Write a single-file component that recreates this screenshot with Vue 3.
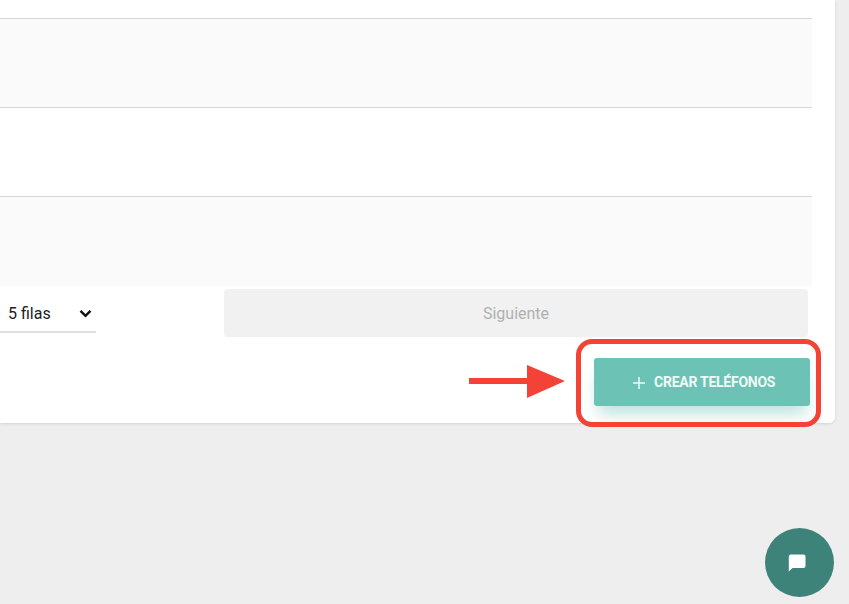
<script setup>
const rows = [
  { id: 1, tone: 'plain', h: 'first' },
  { id: 2, tone: 'stripe' },
  { id: 3, tone: 'plain' },
  { id: 4, tone: 'stripe' }
]
</script>

<template>
  <div class="page">
    <section class="card">
      <div class="table">
        <div v-for="r in rows" :key="r.id" class="row" :class="[r.tone, r.h]"></div>
      </div>
      <div class="pagination">
        <div class="size-wrap">
          <select class="size" aria-label="Filas">
            <option>5 filas</option>
          </select>
          <svg class="chev" width="13" height="9" viewBox="0 0 13 9"><path d="M1.500 1.800L6.500 6.800L11.500 1.800" fill="none" stroke="#111" stroke-width="2.400"/></svg>
        </div>
        <button class="next" disabled>Siguiente</button>
      </div>
      <div class="actions">
        <button class="create">
          <svg class="plus" width="14" height="14" viewBox="0 0 14 14"><path d="M7 1v12M1 7h12" stroke="currentColor" stroke-width="1.500" fill="none"/></svg>
          <span>CREAR TELÉFONOS</span>
        </button>
      </div>
    </section>

    <svg class="arrow" width="100" height="38" viewBox="0 0 100 38">
      <path d="M1 15H59V2L97 18L59 35V21H1Z" fill="#f44336"/>
    </svg>
    <div class="highlight"></div>

    <button class="chat" aria-label="Chat">
      <svg width="20" height="20" viewBox="0 0 20 20"><path d="M3.500 1.500H16.500A2 2 0 0 1 18.500 3.500V13A2 2 0 0 1 16.500 15H5.500L1.800 18.500V3.500A2 2 0 0 1 3.500 1.500Z" fill="#fff"/></svg>
    </button>
  </div>
</template>

<style scoped>
.page {
  position: relative;
  width: 849px;
  height: 604px;
  overflow: hidden;
  background: #eeeeee;
  font-family: Roboto, "Liberation Sans", sans-serif;
}
.card {
  width: 835px;
  height: 423px;
  box-sizing: border-box;
  background: #fff;
  border-radius: 0 0 6px 0;
  box-shadow: 0 1px 3px rgba(0, 0, 0, 0.12);
}
.table {
  width: 812px;
}
.row {
  height: 88px;
  border-bottom: 1px solid #d6d6d6;
}
.row:last-child {
  border-bottom: none;
  height: 89px;
}
.row.first {
  height: 18px;
}
.stripe {
  background: #fafafa;
}
.pagination {
  width: 808px;
  height: 51px;
  padding-top: 3px;
  box-sizing: border-box;
  display: flex;
  align-items: flex-start;
}
.size-wrap {
  position: relative;
  width: 96px;
  height: 44px;
  margin-right: 128px;
  flex: none;
}
.size {
  appearance: none;
  display: block;
  width: 100%;
  height: 100%;
  box-sizing: border-box;
  padding: 7px 0 0 8px;
  border: none;
  border-bottom: 2px solid #dedede;
  background: transparent;
  font-family: inherit;
  font-size: 16px;
  color: #212121;
  outline: none;
}
.chev {
  position: absolute;
  right: 4px;
  top: 20px;
  pointer-events: none;
}
.next {
  flex: 1;
  height: 48px;
  border: none;
  border-radius: 4px;
  background: #f1f1f1;
  color: #b0b0b0;
  font-family: inherit;
  font-size: 16px;
}
.actions {
  display: flex;
  justify-content: flex-end;
  width: 810px;
  padding-top: 21px;
}
.create {
  width: 216px;
  height: 48px;
  border: none;
  border-radius: 3px;
  background: #6dc2b6;
  color: #eefaf7;
  font-family: inherit;
  font-size: 14px;
  font-weight: 700;
  letter-spacing: -0.25px;
  display: flex;
  align-items: center;
  justify-content: flex-start;
  gap: 8px;
  padding: 0 0 0 38px;
  box-shadow: 0 12px 16px -4px rgba(109, 194, 182, 0.45);
}
.plus {
  margin-top: 2px;
  flex: none;
}
.arrow {
  position: absolute;
  left: 468px;
  top: 363px;
}
.highlight {
  position: absolute;
  left: 576px;
  top: 339px;
  width: 245px;
  height: 88px;
  box-sizing: border-box;
  border: 5px solid #f44336;
  border-radius: 16px;
}
.chat {
  position: absolute;
  left: 765px;
  top: 528px;
  width: 69px;
  height: 69px;
  border: none;
  border-radius: 50%;
  background: #3e8379;
  display: flex;
  align-items: center;
  justify-content: center;
  padding: 0 6px 0 0;
}
</style>
